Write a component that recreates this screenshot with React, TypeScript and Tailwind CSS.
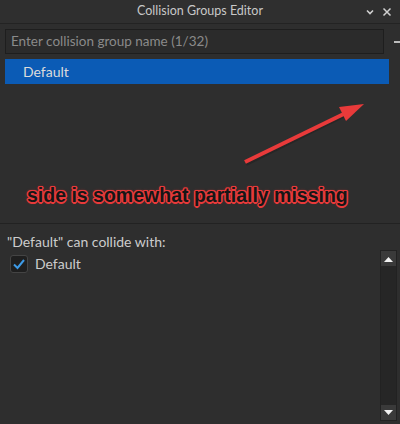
import React from "react";

function ChevronDown() {
  return (
    <svg width="10" height="10" viewBox="0 0 10 10" className="text-[#d0d0d0]">
      <path d="M2 3.5 L5 6.5 L8 3.5" stroke="currentColor" strokeWidth="1.6" fill="none" />
    </svg>
  );
}

function CloseIcon() {
  return (
    <svg width="10" height="10" viewBox="0 0 10 10" className="text-[#d0d0d0]">
      <path d="M1.5 1.5 L8.5 8.5 M8.5 1.5 L1.5 8.5" stroke="currentColor" strokeWidth="1.5" />
    </svg>
  );
}

function Check() {
  return (
    <svg width="14" height="14" viewBox="0 0 14 14">
      <path d="M2 7.5 L5.5 11 L12 3" stroke="#3d9ae6" strokeWidth="2" fill="none" />
    </svg>
  );
}

function ScrollButton({ down }: { down?: boolean }) {
  return (
    <div className="h-[15px] w-[15px] bg-[#3a3a3a] flex items-center justify-center">
      <svg width="9" height="6" viewBox="0 0 9 6">
        <path d={down ? "M0 0 H9 L4.5 5 Z" : "M0 6 H9 L4.5 1 Z"} fill="#f2f2f2" />
      </svg>
    </div>
  );
}

const RED = "#e83a3a";

export default function App() {
  return (
    <div className="relative w-[400px] h-[424px] bg-[#2e2e2e] overflow-hidden font-['Lato',sans-serif] text-[#cfcfcf]">
      <div className="flex flex-col h-full">
        {/* title bar */}
        <div className="h-[24px] flex items-center border-b border-[#232323] bg-[#2f2f2f] relative">
          <div className="flex-1 text-center text-[12.5px] text-[#c8c8c8]">Collision Groups Editor</div>
          <div className="absolute right-[8px] top-[7px] flex items-center gap-[7px]">
            <ChevronDown />
            <CloseIcon />
          </div>
        </div>

        {/* groups */}
        <div className="flex flex-col pl-[5px] pt-[5px] h-[200px] border-b border-[#222222]">
          <div className="flex items-center">
            <div className="w-[380px] h-[25px] border border-[#1e1e1e] bg-[#2b2b2b] flex items-center px-[5px] text-[13.5px] text-[#8a8a8a]">
              Enter collision group name (1/32)
            </div>
            <div className="ml-[10px] w-[6px] h-[2px] bg-[#bdbdbd]" />
          </div>
          <div className="mt-[5px] w-[384px] h-[25px] bg-[#0b5bb5] flex items-center pl-[18px] text-[14px] text-[#dcdcdc]">
            Default
          </div>
        </div>

        {/* collide section */}
        <div className="flex flex-1">
          <div className="flex-1 pl-[7px] pt-[7px]">
            <div className="text-[14px] text-[#cccccc]">"Default" can collide with:</div>
            <div className="flex items-center mt-[1px] pl-[3px] gap-[7px]">
              <div className="w-[18px] h-[18px] rounded-[3px] bg-[#1f1f1f] border border-[#444444] flex items-center justify-center">
                <Check />
              </div>
              <span className="text-[14px] text-[#cccccc]">Default</span>
            </div>
          </div>
          <div className="w-[17px] mr-[3px] mt-[26px] mb-[3px] flex flex-col border border-[#222222] bg-[#262626]">
            <ScrollButton />
            <div className="flex-1" />
            <ScrollButton down />
          </div>
        </div>
      </div>

      {/* annotation */}
      <svg className="absolute left-0 top-0" width="400" height="424">
        <line x1="246" y1="164" x2="355" y2="110" stroke="#1c1c1c" strokeOpacity="0.45" strokeWidth="4" />
        <line x1="245" y1="162" x2="354" y2="109" stroke={RED} strokeWidth="4" />
        <path d="M364 104 L339 107 L346 121 Z" fill={RED} />
      </svg>
      <div className="absolute left-[27px] top-[186px] leading-none text-[19.5px] font-bold font-['Liberation_Sans',sans-serif] text-[#161616] [text-shadow:1.5px_0_0_#e83a3a,-1.5px_0_0_#e83a3a,0_1.5px_0_#e83a3a,0_-1.5px_0_#e83a3a,1px_1px_0_#e83a3a,-1px_-1px_0_#e83a3a,1px_-1px_0_#e83a3a,-1px_1px_0_#e83a3a,0_0_3px_#e83a3a]">
        side is somewhat partially missing
      </div>
    </div>
  );
}
